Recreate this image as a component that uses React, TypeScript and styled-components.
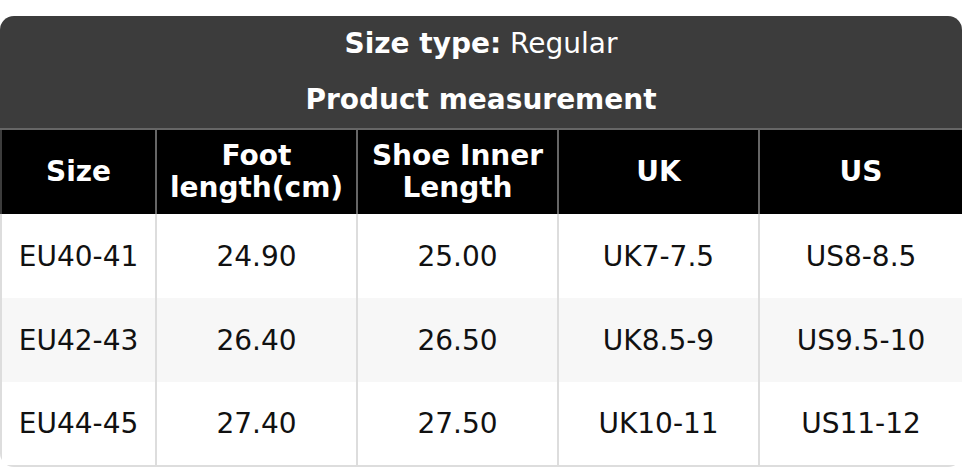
import styled, { createGlobalStyle } from "styled-components"

const GlobalStyle = createGlobalStyle`
    body {
        margin: 0;
        background: #fff;
        font-family: "DejaVu Sans", "Liberation Sans", sans-serif;
    }
`

const columns = [155, 201, 201, 201, 204]
const heads = [["Size"], ["Foot", "length(cm)"], ["Shoe Inner", "Length"], ["UK"], ["US"]]
const rows = [
    ["EU40-41", "24.90", "25.00", "UK7-7.5", "US8-8.5"],
    ["EU42-43", "26.40", "26.50", "UK8.5-9", "US9.5-10"],
    ["EU44-45", "27.40", "27.50", "UK10-11", "US11-12"],
]

const App = () => {
    return (
        <Page>
            <GlobalStyle />
            <Card>
                <Banner>
                    <BannerLine>
                        <strong>Size type:</strong> Regular
                    </BannerLine>
                    <BannerLine>
                        <strong>Product measurement</strong>
                    </BannerLine>
                </Banner>
                <Table>
                    <colgroup>
                        {columns.map((w, i) => (
                            <col key={i} style={{ width: w }} />
                        ))}
                    </colgroup>
                    <thead>
                        <tr>
                            {heads.map((h, i) => (
                                <HeadCell key={i}>
                                    {h.map((line, j) => (
                                        <div key={j}>{line}</div>
                                    ))}
                                </HeadCell>
                            ))}
                        </tr>
                    </thead>
                    <tbody>
                        {rows.map((r, i) => (
                            <Row key={i} $striped={i % 2 === 1}>
                                {r.map((v, j) => (
                                    <Cell key={j}>{v}</Cell>
                                ))}
                            </Row>
                        ))}
                    </tbody>
                </Table>
            </Card>
        </Page>
    )
}

const Page = styled.div`
    padding-top: 16px;
`

const Card = styled.div`
    width: 962px;
    border-radius: 14px;
    overflow: hidden;
    background: #fff;
`

const Banner = styled.div`
    display: flex;
    flex-direction: column;
    align-items: center;
    height: 112px;
    background: #3c3c3c;
    color: #fff;
    border-bottom: 2px solid #666;
`

const BannerLine = styled.div`
    font-size: 28px;
    line-height: 56px;
    height: 56px;
    white-space: pre;

    strong {
        font-weight: bold;
    }
`

const Table = styled.table`
    width: 962px;
    table-layout: fixed;
    border-collapse: collapse;
    font-size: 28px;
`

const HeadCell = styled.th`
    height: 84px;
    padding: 0;
    box-sizing: border-box;
    background: #000;
    color: #fff;
    font-weight: bold;
    line-height: 32px;
    text-align: center;
    border-left: 2px solid #666;
    border-right: 2px solid #666;

    &:first-child {
        border-left-color: #3c3c3c;
    }
`

const Row = styled.tr<{ $striped: boolean }>`
    background: ${(p) => (p.$striped ? "#f7f7f7" : "#fff")};
`

const Cell = styled.td`
    height: 84px;
    padding: 0;
    box-sizing: border-box;
    color: #111;
    text-align: center;
    border: 2px solid #ddd;
    border-top: none;
    border-bottom: none;

    tr:last-child & {
        border-bottom: 2px solid #ddd;
    }
`

export default App
